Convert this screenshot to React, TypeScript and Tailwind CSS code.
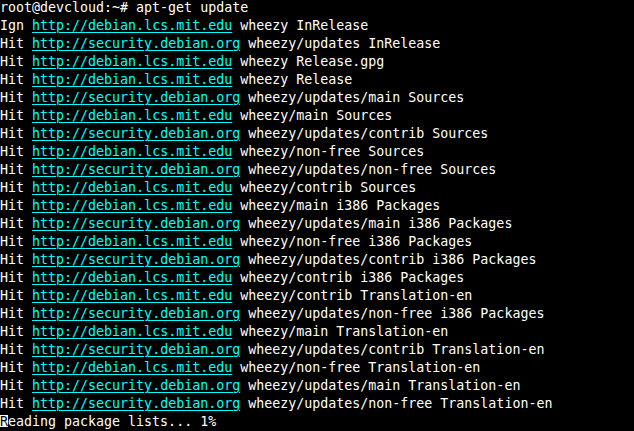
import React from "react";

const D = "http://debian.lcs.mit.edu";
const S = "http://security.debian.org";

const lines: [string, string, string][] = [
  ["Ign", D, "wheezy InRelease"],
  ["Hit", S, "wheezy/updates InRelease"],
  ["Hit", D, "wheezy Release.gpg"],
  ["Hit", D, "wheezy Release"],
  ["Hit", S, "wheezy/updates/main Sources"],
  ["Hit", D, "wheezy/main Sources"],
  ["Hit", S, "wheezy/updates/contrib Sources"],
  ["Hit", D, "wheezy/non-free Sources"],
  ["Hit", S, "wheezy/updates/non-free Sources"],
  ["Hit", D, "wheezy/contrib Sources"],
  ["Hit", D, "wheezy/main i386 Packages"],
  ["Hit", S, "wheezy/updates/main i386 Packages"],
  ["Hit", D, "wheezy/non-free i386 Packages"],
  ["Hit", S, "wheezy/updates/contrib i386 Packages"],
  ["Hit", D, "wheezy/contrib i386 Packages"],
  ["Hit", D, "wheezy/contrib Translation-en"],
  ["Hit", S, "wheezy/updates/non-free i386 Packages"],
  ["Hit", D, "wheezy/main Translation-en"],
  ["Hit", S, "wheezy/updates/contrib Translation-en"],
  ["Hit", D, "wheezy/non-free Translation-en"],
  ["Hit", S, "wheezy/updates/main Translation-en"],
  ["Hit", S, "wheezy/updates/non-free Translation-en"],
];

export default function App() {
  return (
    <div className="w-[634px] h-[431px] bg-black overflow-hidden">
      <div
        className="mt-[-1px] text-white text-[13.3px] leading-[18px] whitespace-pre"
        style={{ fontFamily: '"DejaVu Sans Mono", "Liberation Mono", monospace' }}
      >
        <div className="h-[18px]">root@devcloud:~# apt-get update</div>
        {lines.map(([a, url, rest], i) => (
          <div key={i} className="h-[18px]">
            {a}{" "}
            <span className="text-[#00ffff] underline decoration-[#00ffff] underline-offset-[2px] decoration-1">
              {url}
            </span>{" "}
            {rest}
          </div>
        ))}
        <div className="h-[18px]">
          <span className="text-black bg-[linear-gradient(to_bottom,transparent_1px,white_1px,white_13px,transparent_13px)]">R</span>
          eading package lists... 1%
        </div>
      </div>
    </div>
  );
}
